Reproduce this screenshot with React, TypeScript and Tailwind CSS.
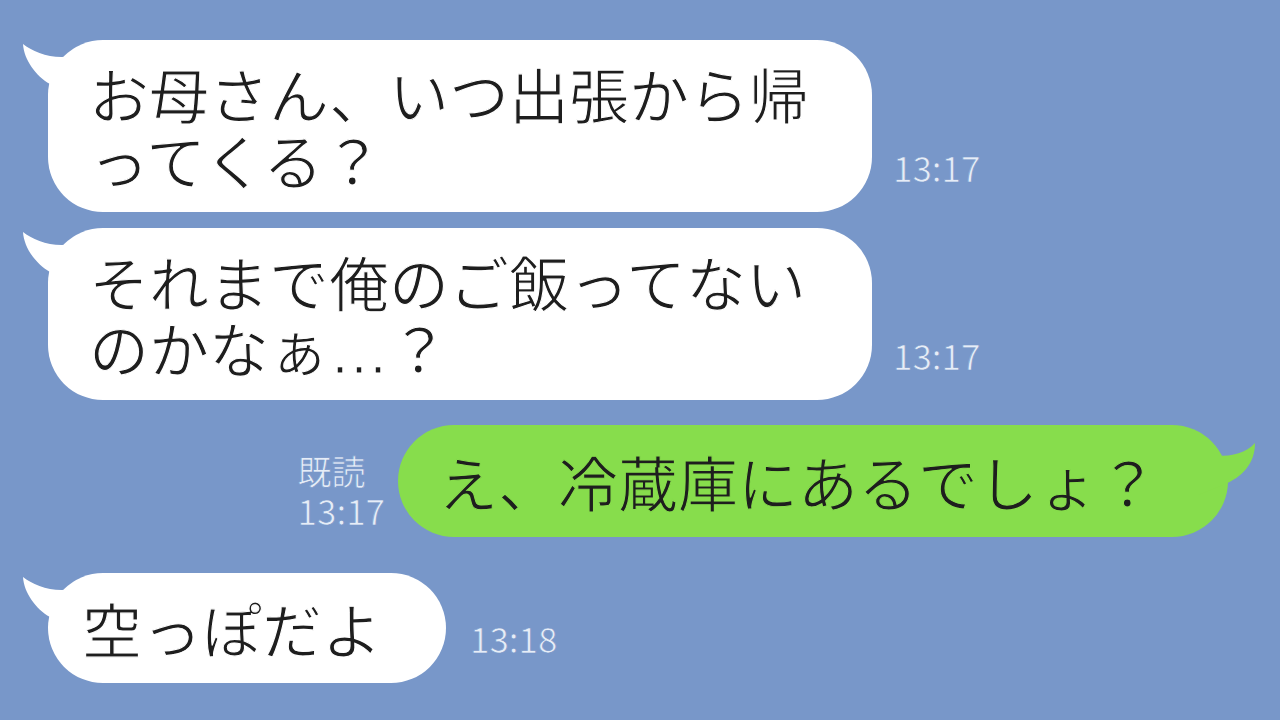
import React from "react";

const JP = { fontFamily: '"Noto Sans CJK JP", "Noto Sans", sans-serif' };

function WhiteTail() {
  return (
    <svg
      className="absolute left-[-30px] top-0"
      width="80"
      height="70"
      viewBox="-30 0 80 70"
    >
      <path
        d="M -25 4 C -15 12, 5 20, 24 16 L 45 20 L 45 60 L 2 44 C -12 36, -24 20, -25 4 Z"
        fill="#ffffff"
      />
    </svg>
  );
}

function GreenTail() {
  return (
    <svg
      className="absolute right-[-30px] top-0"
      width="70"
      height="80"
      viewBox="-40 0 70 80"
    >
      <path
        d="M 27 18 C 18 28, 5 31, -11 31 L -30 31 L -30 70 L -5 60 C 15 52, 27 38, 27 18 Z"
        fill="#87dd4c"
      />
    </svg>
  );
}

function Time({ t, className = "" }: { t: string; className?: string }) {
  return (
    <div
      className={
        "text-[35px] leading-[36px] text-[#e6edf7] [-webkit-text-stroke:0.7px_#7897c9] " +
        className
      }
      style={JP}
    >
      {t}
    </div>
  );
}

export default function App() {
  return (
    <div
      className="w-[1280px] h-[720px] bg-[#7897c9] overflow-hidden flex flex-col pt-[40px] text-[#1e1e1e]"
      style={JP}
    >
      <div className="flex items-end pl-[48px] gap-[21px]">
        <div className="relative w-[824px] h-[172px] bg-white rounded-[55px] pl-[41px] pt-[20px] text-[60px] leading-[66px] whitespace-nowrap [-webkit-text-stroke:1.1px_#ffffff]">
          <WhiteTail />
          <div className="relative">お母さん、いつ出張から帰</div>
          <div className="relative">ってくる？</div>
        </div>
        <Time t="13:17" className="mb-[27px]" />
      </div>

      <div className="flex items-end pl-[48px] gap-[21px] mt-[16px]">
        <div className="relative w-[824px] h-[172px] bg-white rounded-[55px] pl-[41px] pt-[20px] text-[60px] leading-[66px] whitespace-nowrap [-webkit-text-stroke:1.1px_#ffffff]">
          <WhiteTail />
          <div className="relative">それまで俺のご飯ってない</div>
          <div className="relative">
            のかなぁ
            <span
              className="inline-block w-[60px]"
              style={{ fontFamily: '"Liberation Sans", sans-serif' }}
            >
              …
            </span>
            ？
          </div>
        </div>
        <Time t="13:17" className="mb-[27px]" />
      </div>

      <div className="flex items-end justify-end pr-[52px] gap-[13px] mt-[25px]">
        <div className="flex flex-col mb-[9px]">
          <div className="text-[34px] leading-[42px] text-[#e6edf7] [-webkit-text-stroke:0.7px_#7897c9]">
            既読
          </div>
          <Time t="13:17" />
        </div>
        <div className="relative w-[830px] h-[112px] bg-[#87dd4c] rounded-[56px] pl-[40px] pt-[23px] text-[60px] leading-[66px] whitespace-nowrap [-webkit-text-stroke:1.1px_#87dd4c]">
          <GreenTail />
          <div className="relative">え、冷蔵庫にあるでしょ？</div>
        </div>
      </div>

      <div className="flex items-end pl-[48px] gap-[24px] mt-[36px]">
        <div className="relative w-[398px] h-[110px] bg-white rounded-[55px] pl-[34px] pt-[22px] text-[60px] leading-[66px] whitespace-nowrap [-webkit-text-stroke:1.1px_#ffffff]">
          <WhiteTail />
          <div className="relative">空っぽだよ</div>
        </div>
        <Time t="13:18" className="mb-[27px]" />
      </div>
    </div>
  );
}
